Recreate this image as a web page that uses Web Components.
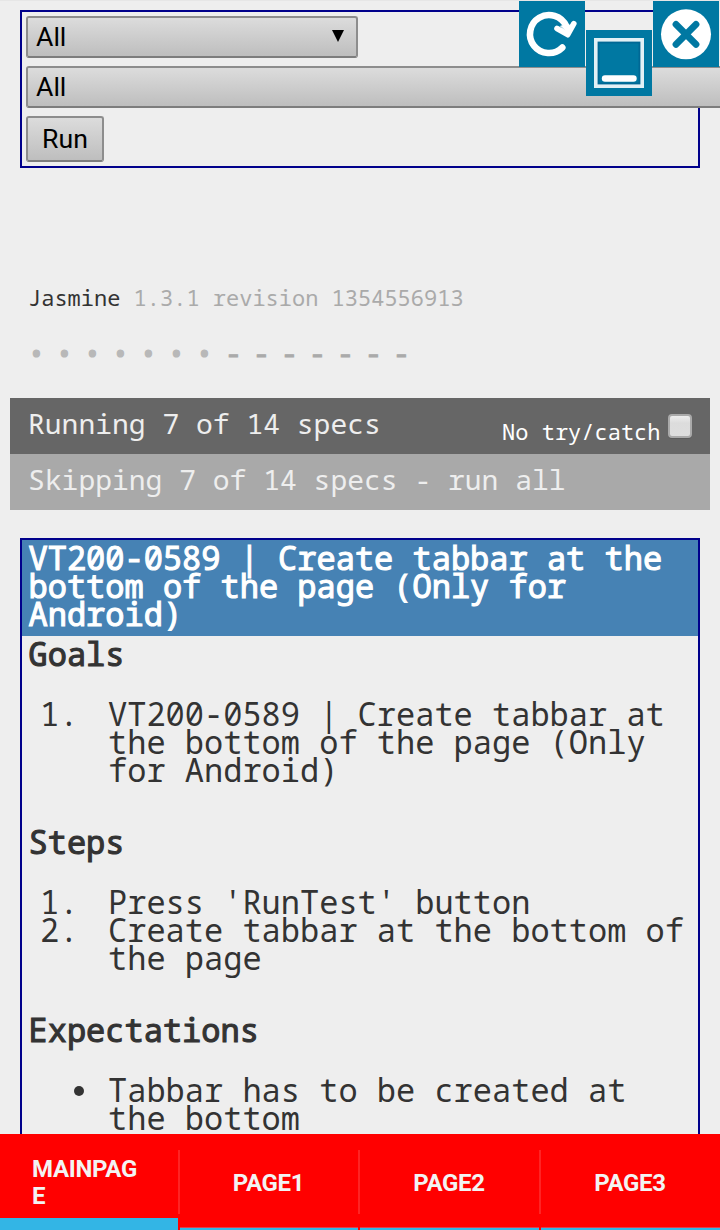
<!DOCTYPE html>
<html lang="en">
<head>
<meta charset="utf-8">
<title>Jasmine specs</title>
<style>
html,body{margin:0;padding:0}
body{height:1230px;overflow:hidden;background:#eee;color:#333;font-family:"Droid Sans Mono","Noto Sans Mono","DejaVu Sans Mono",monospace}
</style>
</head>
<body>
<spec-app></spec-app>
<script>
const define=(name,html,setup)=>customElements.define(name,class extends HTMLElement{
  constructor(){
    super();
    const t=document.createElement('template');
    t.innerHTML=html;
    this.attachShadow({mode:'open'}).append(t.content.cloneNode(true));
  }
  connectedCallback(){ if(setup) setup(this,this.shadowRoot); }
});

define('drop-down',`<style>
:host{display:flex;box-sizing:border-box;width:332px;height:42px;border:2px solid #8d8d8d;border-bottom-color:#7d7d7d;border-radius:3px;background:linear-gradient(#dcdcdc,#bebebe);align-items:center;justify-content:space-between;padding:0 12px 0 8px;font:26.67px/38px Roboto,sans-serif;color:#000}
:host([wide]){width:760px}
svg{display:block;margin-bottom:3px}
</style><slot></slot><svg width="12" height="12" viewBox="0 0 12 12"><path d="M0 0h12L6 12z"/></svg>`);

define('push-button',`<style>
:host{display:flex;box-sizing:border-box;width:78px;height:46px;border:2px solid #8d8d8d;border-bottom-color:#7d7d7d;border-radius:3px;background:linear-gradient(#dcdcdc,#bebebe);align-items:center;justify-content:center;font:26.67px/38px Roboto,sans-serif;color:#000}
</style><slot></slot>`);

define('filter-panel',`<style>
:host{display:flex;flex-direction:column;gap:8px;box-sizing:border-box;width:680px;height:158px;margin:10px 20px 0;border:2px solid #00008b;padding:4px}
</style><drop-down>All</drop-down><drop-down wide>All</drop-down><push-button>Run</push-button>`);

define('tool-buttons',`<style>
:host{position:absolute;top:1px;left:519px;display:flex;gap:1px}
svg{display:block;background:#0078a2}
.low{margin-top:29px}
</style>
<svg width="66" height="66" viewBox="0 0 66 66" fill="none" stroke="#fff" stroke-linecap="round" stroke-linejoin="round"><path d="M43.3 46.6A19 19 0 1 1 47.3 25.2" stroke-width="6.6"/><path d="M38 27.5L48.7 33.7L54.8 22.7" stroke-width="5.6"/><path d="M42 25L53 24L49 33z" fill="#fff" stroke-width="1"/></svg>
<svg class="low" width="66" height="66" viewBox="0 0 66 66" fill="none"><rect x="12" y="12" width="42" height="42" stroke="#006895" stroke-width="3"/><rect x="9.8" y="9.8" width="46.4" height="46.4" stroke="#e2f0f5" stroke-width="3.6"/><path d="M19 48.5H47.5" stroke="#fff" stroke-width="6.4" stroke-linecap="round"/></svg>
<svg width="66" height="66" viewBox="0 0 66 66"><circle cx="33" cy="33.3" r="25" fill="#fff"/><path d="M23 23.3L43 43.3M43 23.3L23 43.3" stroke="#0078a2" stroke-width="6.8" stroke-linecap="round"/></svg>`);

define('run-banner',`<style>
:host{display:block;margin:115px 28px 0;height:28px;font-size:22px;line-height:28px;white-space:pre;color:#aaa}
b{font-weight:400;color:#333}
</style><b>Jasmine</b> <slot></slot>`);

define('spec-symbols',`<style>
:host{display:flex;margin:28px 28px 0;height:28px;font-size:28px;line-height:28px;color:#b8b8b8}
span{width:28px;-webkit-text-stroke:1.2px #b8b8b8}
.skip{color:#aaa;-webkit-text-stroke:1px #aaa;text-indent:1px;line-height:26px}
</style>`,(el,root)=>{
  for(let i=0;i<14;i++){
    const s=document.createElement('span');
    s.textContent=i<7?'•':'-';
    if(i>6)s.className='skip';
    root.append(s);
  }
});

define('check-box',`<style>
:host{display:block;box-sizing:border-box;width:24px;height:24px;border:2px solid #aaa;border-radius:4px;background:linear-gradient(#eee,#dcdcdc 35%,#dedede);box-shadow:0 1px 0 #5b5b5b}
</style>`);

define('status-bar',`<style>
:host{display:flex;justify-content:space-between;box-sizing:border-box;margin:0 10px;height:56px;padding:0 18px;line-height:50px;font-size:28px;color:#eee;background:#666;white-space:pre}
:host([skipped]){background:#a9a9a9}
.end{display:flex;align-items:flex-start}
</style><span><slot></slot></span><span class="end"><slot name="end"></slot></span>`);

define('exception-option',`<style>
:host{display:flex;gap:7.5px;font-size:22px;color:#fff;line-height:28px}
span{margin-top:19px}
check-box{margin-top:16px}
</style><span>No try/catch</span><check-box></check-box>`);

define('spec-section',`<style>
:host{display:block;padding:0 6px;margin-bottom:44px}
h2{margin:0 0 32px;padding-left:.5px;font-size:32px;line-height:28px;font-weight:400;-webkit-text-stroke:1.1px currentColor}
ol,ul{margin:0;padding:0;list-style:none;font-size:32px;line-height:28px;white-space:pre}
li{display:flex}
i{font-style:normal;width:68px;margin-left:12px}
.dot{width:10px;height:10px;border-radius:50%;background:#333;margin:10px 24px 0 46px}
</style><h2></h2>`,(el,root)=>{
  root.querySelector('h2').textContent=el.getAttribute('heading');
  const bullets=el.hasAttribute('bullets');
  const list=document.createElement(bullets?'ul':'ol');
  el.querySelectorAll('p').forEach((src,n)=>{
    const li=document.createElement('li'),mark=document.createElement('i'),text=document.createElement('span');
    if(bullets)mark.className='dot'; else mark.textContent=(n+1)+'.';
    text.textContent=src.textContent.replaceAll(' / ','\n');
    li.append(mark,text);
    list.append(li);
  });
  root.append(list);
});

define('spec-card',`<style>
:host{display:block;box-sizing:border-box;width:680px;height:640px;margin:28px 20px 0;border:2px solid #00008b}
h1{margin:0 0 4px;padding:4px 6px 8px 6.5px;font-size:32px;line-height:28px;color:#fff;background:#4682b4;white-space:pre;font-weight:400;-webkit-text-stroke:1.1px #fff}
</style><h1>VT200-0589 | Create tabbar at the
bottom of the page (Only for
Android)</h1>
<spec-section heading="Goals"><p>VT200-0589 | Create tabbar at / the bottom of the page (Only / for Android)</p></spec-section>
<spec-section heading="Steps"><p>Press 'RunTest' button</p><p>Create tabbar at the bottom of / the page</p></spec-section>
<spec-section heading="Expectations" bullets><p>Tabbar has to be created at / the bottom</p></spec-section>`);

define('tab-item',`<style>
:host{display:flex;flex-direction:column;color:#f3f3f3;font:700 24px/27px Roboto,sans-serif;letter-spacing:-.3px}
.label{flex:1;display:flex;align-items:center;justify-content:center;white-space:pre;padding:5px 3px 0 0}
.line{height:3px;margin-right:2px;background:#33b5e5;box-sizing:border-box;border-top:1px solid #e0414c}
:host([selected]) .line{height:12px;border:0}
:host([selected]) .label{padding:13px 0 0 32px;justify-content:flex-start}
:host(:not(:last-child)) .label{background:linear-gradient(#ff2424,#ff2424) right 0 top 16px/2px 64px no-repeat}
:host(:last-child) .line{margin-right:0}
:host(:last-child) .label{padding-right:1px}
</style><div class="label"><slot></slot></div><div class="line"></div>`);

define('tab-bar',`<style>
:host{position:absolute;left:0;top:1134px;width:720px;height:96px;display:grid;grid-template-columns:180px 180px 181px 179px;background:#f00}
</style><slot></slot>`);

define('spec-app',`<style>
:host{display:flow-root;box-sizing:border-box;position:relative;width:720px;height:1230px;overflow:hidden;background:#eee;border-top:1px solid #e6e6e6}
filter-panel{margin-top:9px}
tool-buttons{top:0}
tab-bar{top:1133px}
.bars{margin-top:31px}
</style>
<filter-panel></filter-panel>
<run-banner>1.3.1 revision 1354556913</run-banner>
<spec-symbols></spec-symbols>
<div class="bars">
<status-bar>Running 7 of 14 specs<exception-option slot="end"></exception-option></status-bar>
<status-bar skipped>Skipping 7 of 14 specs - run all</status-bar>
</div>
<spec-card></spec-card>
<tool-buttons></tool-buttons>
<tab-bar><tab-item selected>MAINPAG
E</tab-item><tab-item>PAGE1</tab-item><tab-item>PAGE2</tab-item><tab-item>PAGE3</tab-item></tab-bar>`);
</script>
</body>
</html>
